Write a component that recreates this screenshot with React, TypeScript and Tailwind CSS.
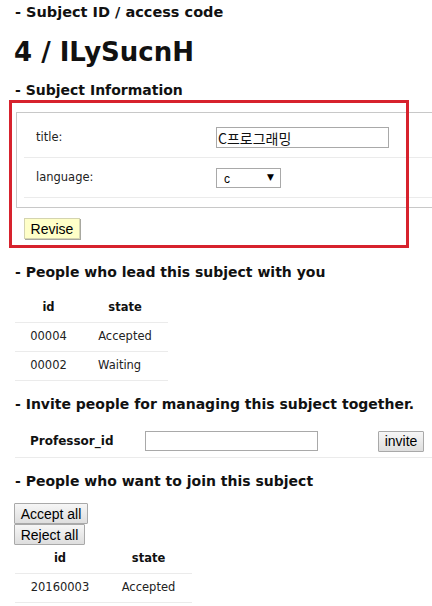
import React from "react";

const V = "font-['DejaVu_Sans',Verdana,sans-serif]";
const A = "font-['Liberation_Sans',Arial,sans-serif]";

function Heading({ children, className = "" }: { children: React.ReactNode; className?: string }) {
  return (
    <div className={`${V} font-bold leading-[20px] text-[#111] pl-[15px] whitespace-nowrap ${className}`}>
      - {children}
    </div>
  );
}

function Btn({ children, className = "" }: { children: React.ReactNode; className?: string }) {
  return (
    <button
      className={`${A} text-[13px] leading-none text-black border border-[#a9a9a9] bg-gradient-to-b from-[#f6f6f6] to-[#dedede] rounded-[1px] ${className}`}
    >
      {children}
    </button>
  );
}

export default function App() {
  return (
    <div className="w-[432px] h-[606px] overflow-hidden bg-white text-[#111]">
      <Heading className="pt-[2px] text-[14.5px]">Subject ID / access code</Heading>
      <div className={`${V} font-bold text-[26px] leading-[32px] pl-[14px] mt-[14px]`}>4 / ILySucnH</div>
      <Heading className="mt-[12px] text-[14px]">Subject Information</Heading>

      {/* Subject information section */}
      <div className="relative h-[148px]">
        <div className="pt-[12px]">
          <div className="ml-[16px] w-[440px] h-[96px] border border-[#c8c8c8] pt-[5px] pl-[7px]">
            <div className={`${V} text-[11.5px] text-[#222]`}>
              <div className="flex items-center h-[40px] border-b border-[#ebebeb]">
                <div className="w-[192px] pl-[12px]">title:</div>
                <input
                  readOnly
                  value="C프로그래밍"
                  className="w-[173px] h-[21px] border border-[#a9a9a9] px-[1px] pt-[1px] text-[14px] text-[#111] font-['Noto_Sans_CJK_KR','Noto_Sans',sans-serif] outline-none"
                />
              </div>
              <div className="flex items-center h-[40px] border-b border-[#ebebeb]">
                <div className="w-[192px] pl-[12px]">language:</div>
                <div className="relative w-[65px] h-[20px] border border-[#a9a9a9] bg-white flex items-center">
                  <span className={`${A} text-[12px] pl-[7px] pt-[2px] text-black`}>c</span>
                  <span className="absolute right-[6px] top-[2px] text-[9px] text-black font-['DejaVu_Sans',sans-serif]">▼</span>
                </div>
              </div>
            </div>
          </div>
          <button
            className={`${A} ml-[24px] mt-[10px] w-[56px] h-[21px] text-[14px] leading-none text-black bg-[#ffffc8] border border-[#d4d4b0] shadow-[1px_1px_0_#a8a8a0]`}
          >
            Revise
          </button>
        </div>
        <div className="absolute left-[9px] top-0 w-[400px] h-[148px] border-[3px] border-[#d7222d] pointer-events-none" />
      </div>

      <Heading className="mt-[14px] text-[14px]">People who lead this subject with you</Heading>
      <div className={`${V} text-[11.5px] ml-[15px] mt-[11px] w-[153px]`}>
        <div className="flex h-[30px] items-center border-b border-[#ebebeb] font-bold text-[#111]">
          <div className="w-[67px] text-center">id</div>
          <div className="w-[86px] text-center">state</div>
        </div>
        <div className="flex h-[29px] items-center border-b border-[#ebebeb] text-[#222]">
          <div className="w-[67px] text-center">00004</div>
          <div className="w-[86px] text-center">Accepted</div>
        </div>
        <div className="flex h-[29px] items-center border-b border-[#ebebeb] text-[#222]">
          <div className="w-[67px] text-center">00002</div>
          <div className="w-[86px] text-left pl-[16px]">Waiting</div>
        </div>
      </div>

      <Heading className="mt-[13px] text-[14px]">Invite people for managing this subject together.</Heading>
      <div className="ml-[15px] mt-[11px] w-[430px] h-[33px] border-b border-[#ebebeb] flex items-center">
        <div className={`${V} font-bold text-[12px] w-[130px] pl-[15px] text-[#111]`}>Professor_id</div>
        <input readOnly className="w-[173px] h-[20px] border border-[#a9a9a9] outline-none" />
        <Btn className="ml-[60px] w-[46px] h-[21px] text-[14px]">invite</Btn>
      </div>

      <Heading className="mt-[13px] text-[14px]">People who want to join this subject</Heading>
      <div className="ml-[14px] mt-[12px] flex flex-col items-start">
        <Btn className="w-[74px] h-[21px] text-[14px]">Accept all</Btn>
        <Btn className="w-[71px] h-[21px] text-[14px]">Reject all</Btn>
      </div>
      <div className={`${V} text-[11.5px] ml-[15px] w-[177px]`}>
        <div className="flex h-[29px] items-center border-b border-[#ebebeb] font-bold text-[#111]">
          <div className="w-[90px] text-center">id</div>
          <div className="w-[87px] text-center">state</div>
        </div>
        <div className="flex h-[29px] items-center border-b border-[#ebebeb] text-[#222]">
          <div className="w-[90px] text-center">20160003</div>
          <div className="w-[87px] text-center">Accepted</div>
        </div>
      </div>
    </div>
  );
}
